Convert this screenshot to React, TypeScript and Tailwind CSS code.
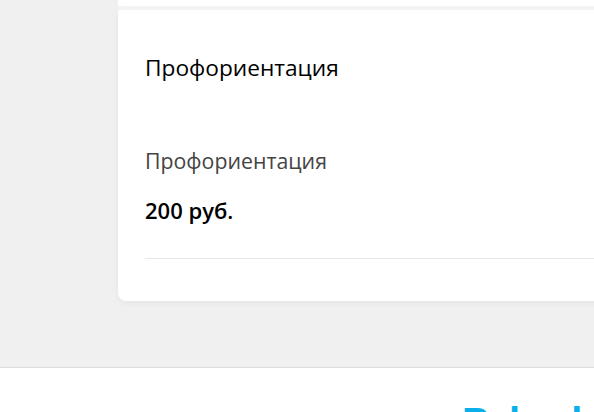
import React from 'react';

const App: React.FC = () => {
  return (
    <div className="w-[594px] h-[412px] overflow-hidden bg-[#f0f0f0] font-['Open_Sans',sans-serif]">
      <div className="pl-[118px] h-[367px]">
        {/* previous card tail */}
        <div className="w-[520px] h-[6px] bg-white" />
        <div className="w-[520px] h-[4px] bg-[#f4f4f4]" />

        {/* Service card */}
        <div className="w-[520px] h-[291px] bg-white rounded-b-[8px] shadow-[0_2px_6px_rgba(0,0,0,0.05)] px-[27px] pt-[44px]">
          <h3 className="text-[22.7px] leading-[28px] text-black">Профориентация</h3>
          <div className="mt-[66px]">
            <p className="text-[21.3px] leading-[26px] text-[#444]">Профориентация</p>
            <p className="mt-[24px] text-[22px] leading-[24px] font-semibold text-black">200 руб.</p>
          </div>
          <div className="mt-[36px] border-t border-[#e8e8e8]" />
        </div>
      </div>

      {/* Footer */}
      <footer className="h-[45px] bg-white border-t border-[#dcdcdc] pl-[462px] pt-[34px]">
        <div className="flex items-start text-[#0bb0ea] font-['Liberation_Sans',sans-serif] font-bold text-[40px] leading-none">
          <span className="tracking-[-2px]">Pol</span>
          <span className="ml-[53px]">l</span>
        </div>
      </footer>
    </div>
  );
};

export default App;
